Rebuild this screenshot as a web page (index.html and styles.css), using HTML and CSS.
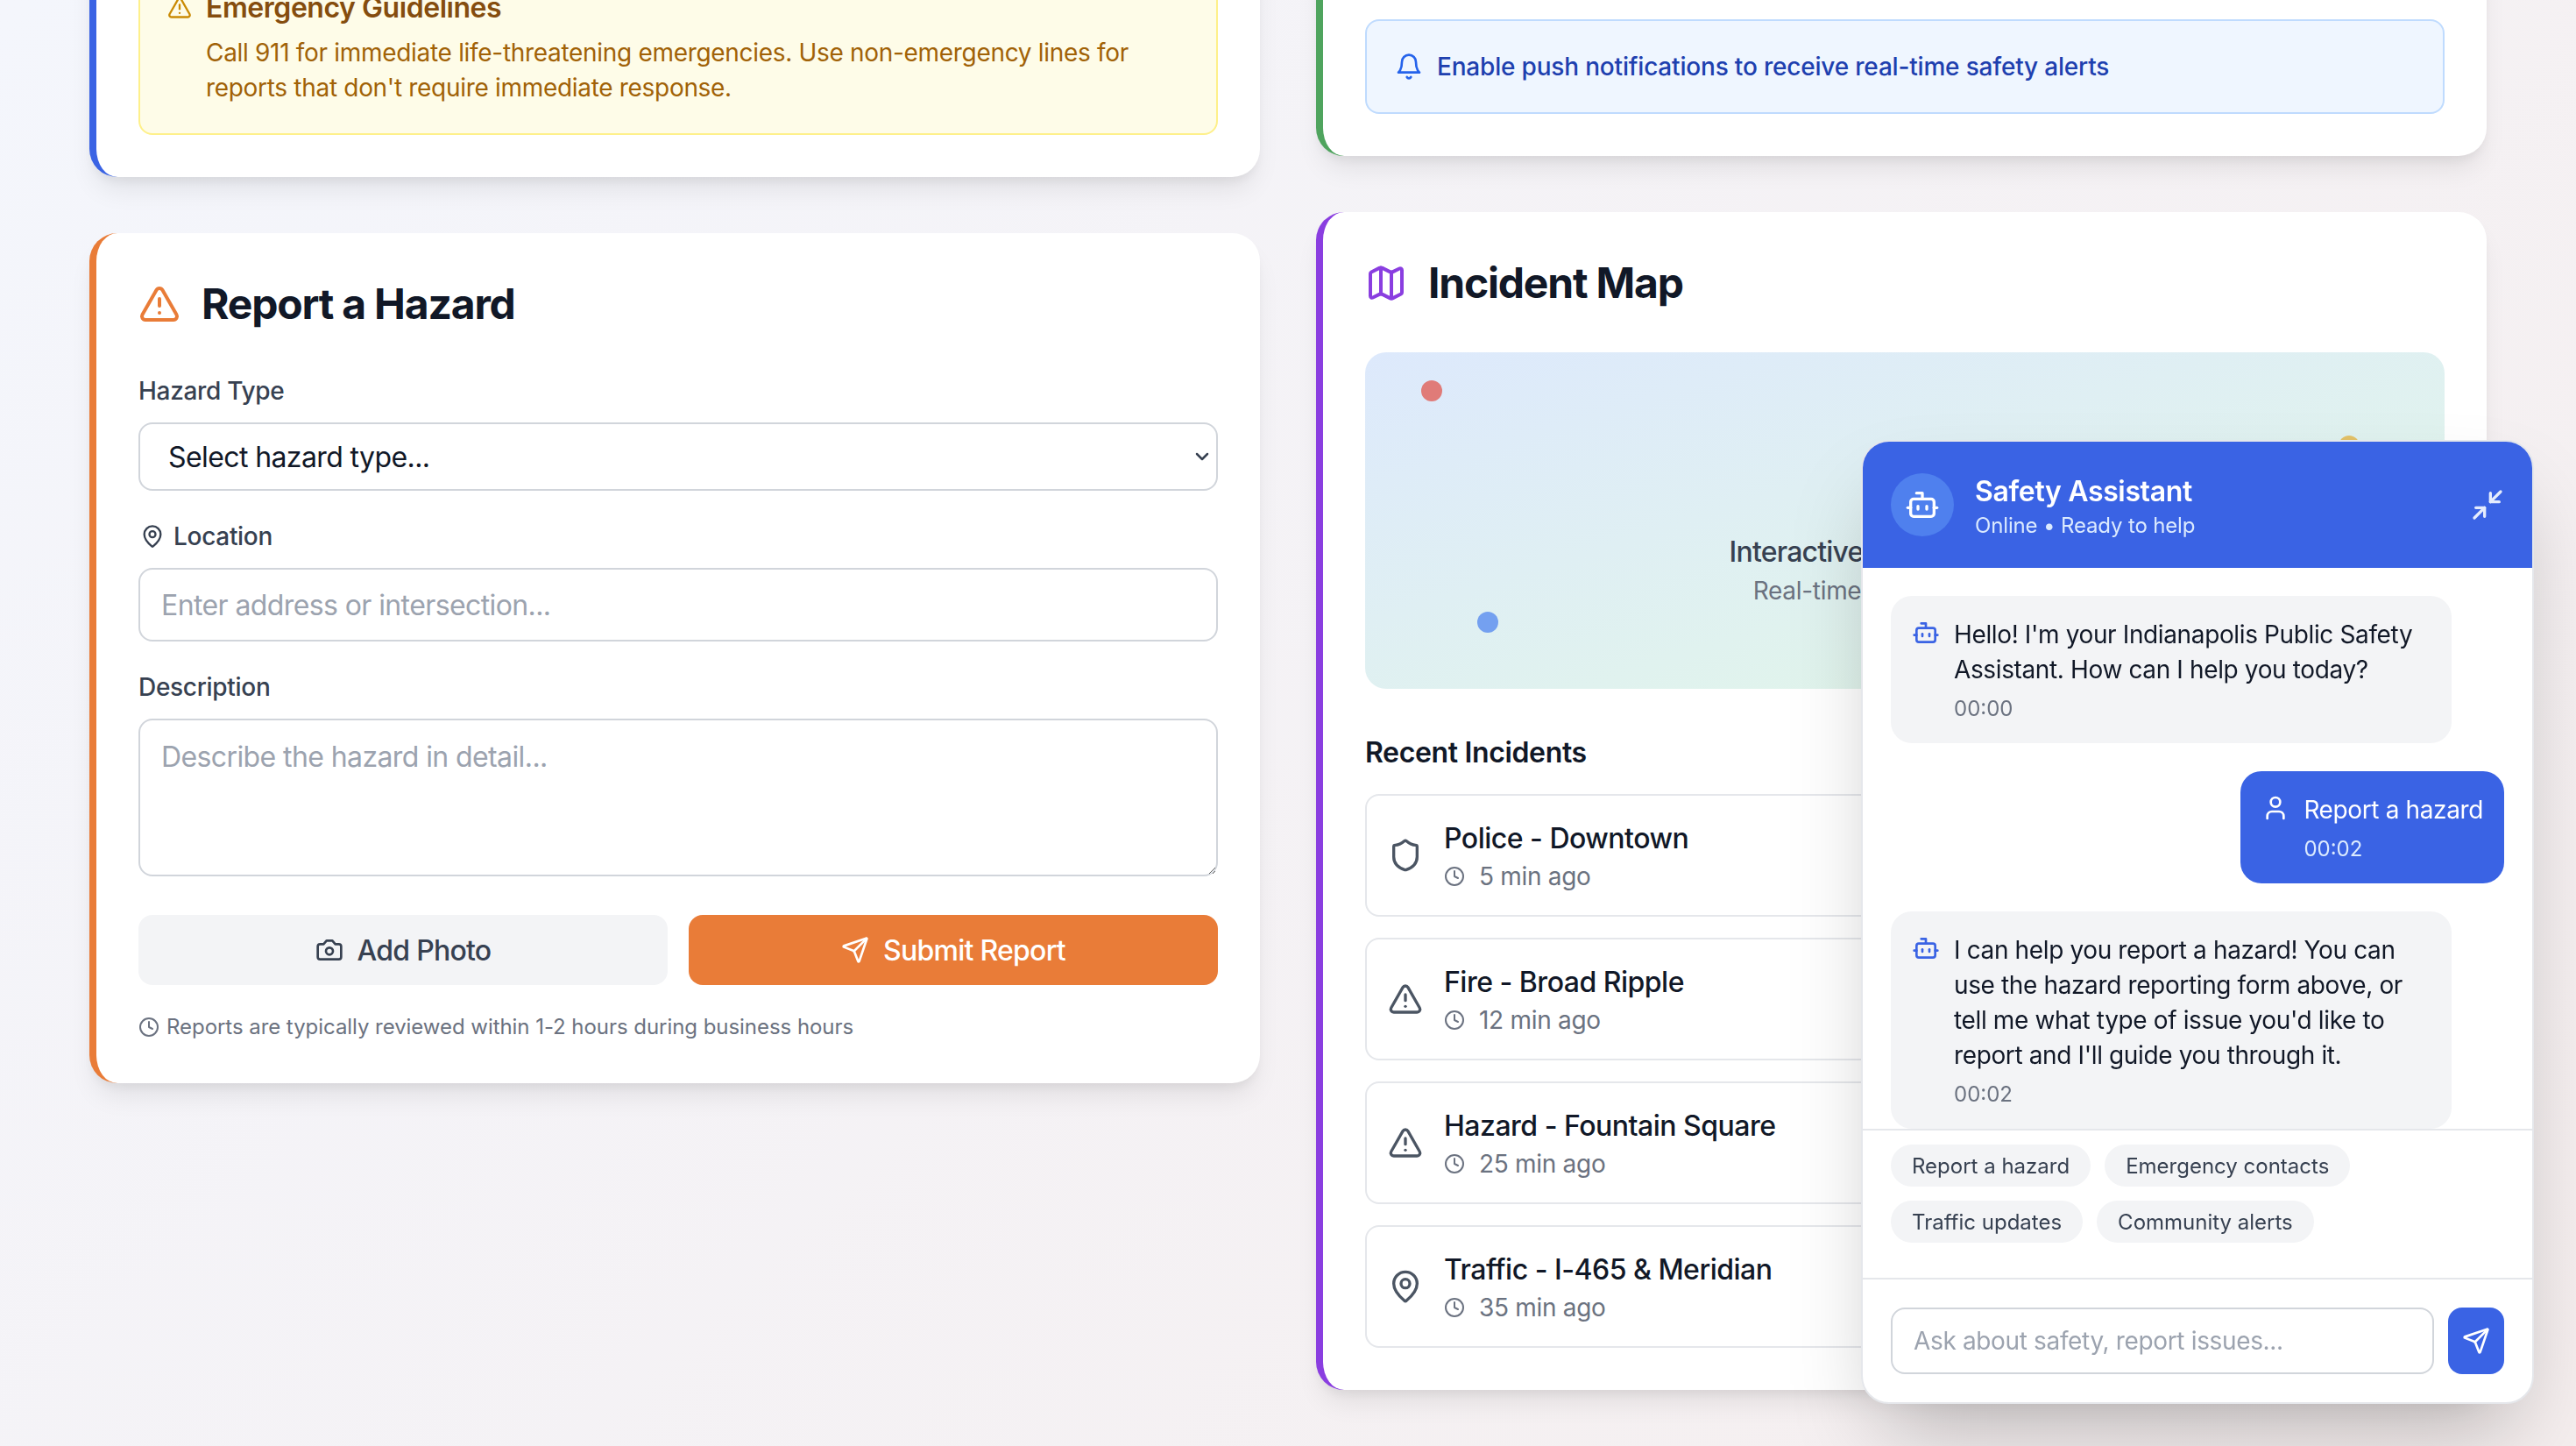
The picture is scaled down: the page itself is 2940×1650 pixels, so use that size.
FILE: index.html
```html
<!DOCTYPE html>
<html lang="en">
<head>
  <meta charset="UTF-8">
  <meta name="viewport" content="width=device-width, initial-scale=1.0">
  <title>Indianapolis Public Safety</title>
  <link rel="stylesheet" href="styles.css">
</head>
<body>
  <!-- Icons -->
  <svg class="sprite" xmlns="http://www.w3.org/2000/svg">
    <symbol id="i-alert" viewBox="0 0 24 24"><path d="m21.73 18-8-14a2 2 0 0 0-3.48 0l-8 14A2 2 0 0 0 4 21h16a2 2 0 0 0 1.73-3"/><path d="M12 9v4"/><path d="M12 17h.01"/></symbol>
    <symbol id="i-bell" viewBox="0 0 24 24"><path d="M6 8a6 6 0 0 1 12 0c0 7 3 9 3 9H3s3-2 3-9"/><path d="M10.3 21a1.94 1.94 0 0 0 3.4 0"/></symbol>
    <symbol id="i-map" viewBox="0 0 24 24"><path d="M14.106 5.553a2 2 0 0 0 1.788 0l3.659-1.83A1 1 0 0 1 21 4.619v12.764a1 1 0 0 1-.553.894l-4.553 2.277a2 2 0 0 1-1.788 0l-4.212-2.106a2 2 0 0 0-1.788 0l-3.659 1.83A1 1 0 0 1 3 19.381V6.618a1 1 0 0 1 .553-.894l4.553-2.277a2 2 0 0 1 1.788 0z"/><path d="M15 5.764v15"/><path d="M9 3.236v15"/></symbol>
    <symbol id="i-pin" viewBox="0 0 24 24"><path d="M20 10c0 4.993-5.539 10.193-7.399 11.799a1 1 0 0 1-1.202 0C9.539 20.193 4 14.993 4 10a8 8 0 0 1 16 0"/><circle cx="12" cy="10" r="3"/></symbol>
    <symbol id="i-camera" viewBox="0 0 24 24"><path d="M14.5 4h-5L7 7H4a2 2 0 0 0-2 2v9a2 2 0 0 0 2 2h16a2 2 0 0 0 2-2V9a2 2 0 0 0-2-2h-3l-2.5-3z"/><circle cx="12" cy="13" r="3"/></symbol>
    <symbol id="i-send" viewBox="0 0 24 24"><path d="M14.536 21.686a.5.5 0 0 0 .937-.024l6.5-19a.496.496 0 0 0-.635-.635l-19 6.5a.5.5 0 0 0-.024.937l7.93 3.18a2 2 0 0 1 1.112 1.11z"/><path d="m21.854 2.147-10.94 10.939"/></symbol>
    <symbol id="i-clock" viewBox="0 0 24 24"><circle cx="12" cy="12" r="10"/><polyline points="12 6 12 12 16 14"/></symbol>
    <symbol id="i-shield" viewBox="0 0 24 24"><path d="M20 13c0 5-3.5 7.5-7.66 8.95a1 1 0 0 1-.67-.01C7.5 20.5 4 18 4 13V6a1 1 0 0 1 1-1c2 0 4.5-1.2 6.24-2.72a1.17 1.17 0 0 1 1.52 0C14.51 3.81 17 5 19 5a1 1 0 0 1 1 1z"/></symbol>
    <symbol id="i-bot" viewBox="0 0 24 24"><path d="M12 8V4H8"/><rect x="4" y="8" width="16" height="12" rx="2"/><path d="M2 14h2"/><path d="M20 14h2"/><path d="M15 13v2"/><path d="M9 13v2"/></symbol>
    <symbol id="i-user" viewBox="0 0 24 24"><path d="M19 21v-2a4 4 0 0 0-4-4H9a4 4 0 0 0-4 4v2"/><circle cx="12" cy="7" r="4"/></symbol>
    <symbol id="i-minimize" viewBox="0 0 24 24"><polyline points="4 14 10 14 10 20"/><polyline points="20 10 14 10 14 4"/><line x1="14" y1="10" x2="21" y2="3"/><line x1="3" y1="21" x2="10" y2="14"/></symbol>
    <symbol id="i-chevron" viewBox="0 0 24 24"><path d="m6 9 6 6 6-6"/></symbol>
  </svg>

  <div class="top-shadow"></div>

  <main class="dashboard">
    <!-- Left column -->
    <div class="column">
      <section class="card card-blue">
        <div class="notice notice-yellow">
          <svg class="icon icon-28"><use href="#i-alert"/></svg>
          <div>
            <h3 class="notice-title">Emergency Guidelines</h3>
            <p class="notice-text">Call 911 for immediate life-threatening emergencies. Use non-emergency lines for reports that don't require immediate response.</p>
          </div>
        </div>
      </section>

      <section class="card card-orange">
        <h2 class="card-title"><svg class="icon icon-48 text-orange"><use href="#i-alert"/></svg>Report a Hazard</h2>

        <form class="hazard-form">
          <label class="field-label" for="hazardType">Hazard Type</label>
          <div class="select-wrap">
            <select id="hazardType" class="field-select">
              <option>Select hazard type...</option>
            </select>
            <svg class="icon select-arrow"><use href="#i-chevron"/></svg>
          </div>

          <label class="field-label label-icon" for="hazardLocation"><svg class="icon icon-28"><use href="#i-pin"/></svg>Location</label>
          <input id="hazardLocation" class="field-input" type="text" placeholder="Enter address or intersection...">

          <label class="field-label" for="hazardDescription">Description</label>
          <textarea id="hazardDescription" class="field-input field-area" placeholder="Describe the hazard in detail..."></textarea>

          <div class="form-buttons">
            <button type="button" class="btn btn-gray"><svg class="icon icon-32"><use href="#i-camera"/></svg>Add Photo</button>
            <button type="button" class="btn btn-orange"><svg class="icon icon-32"><use href="#i-send"/></svg>Submit Report</button>
          </div>
        </form>

        <p class="form-hint"><svg class="icon icon-24"><use href="#i-clock"/></svg>Reports are typically reviewed within 1-2 hours during business hours</p>
      </section>
    </div>

    <!-- Right column -->
    <div class="column">
      <section class="card card-green">
        <div class="notice notice-blue">
          <svg class="icon icon-32"><use href="#i-bell"/></svg>
          <span>Enable push notifications to receive real-time safety alerts</span>
        </div>
      </section>

      <section class="card card-purple">
        <h2 class="card-title"><svg class="icon icon-48 text-purple"><use href="#i-map"/></svg>Incident Map</h2>

        <div class="map-box">
          <span class="map-dot dot-red"></span>
          <span class="map-dot dot-yellow"></span>
          <span class="map-dot dot-blue"></span>
          <p class="map-title">Interactive Crime Map View</p>
          <p class="map-sub">Real-time incident tracking</p>
        </div>

        <h3 class="list-title">Recent Incidents</h3>
        <ul class="incident-list">
          <li class="incident">
            <svg class="icon icon-40"><use href="#i-shield"/></svg>
            <div>
              <div class="incident-name">Police - Downtown</div>
              <div class="incident-time"><svg class="icon icon-24"><use href="#i-clock"/></svg>5 min ago</div>
            </div>
          </li>
          <li class="incident">
            <svg class="icon icon-40"><use href="#i-alert"/></svg>
            <div>
              <div class="incident-name">Fire - Broad Ripple</div>
              <div class="incident-time"><svg class="icon icon-24"><use href="#i-clock"/></svg>12 min ago</div>
            </div>
          </li>
          <li class="incident">
            <svg class="icon icon-40"><use href="#i-alert"/></svg>
            <div>
              <div class="incident-name">Hazard - Fountain Square</div>
              <div class="incident-time"><svg class="icon icon-24"><use href="#i-clock"/></svg>25 min ago</div>
            </div>
          </li>
          <li class="incident">
            <svg class="icon icon-40"><use href="#i-pin"/></svg>
            <div>
              <div class="incident-name">Traffic - I-465 &amp; Meridian</div>
              <div class="incident-time"><svg class="icon icon-24"><use href="#i-clock"/></svg>35 min ago</div>
            </div>
          </li>
        </ul>
      </section>
    </div>
  </main>

  <!-- Chat widget -->
  <aside class="chat">
    <header class="chat-header">
      <div class="chat-avatar"><svg class="icon icon-40"><use href="#i-bot"/></svg></div>
      <div class="chat-heading">
        <div class="chat-name">Safety Assistant</div>
        <div class="chat-status">Online • Ready to help</div>
      </div>
      <svg class="icon icon-40 chat-close"><use href="#i-minimize"/></svg>
    </header>

    <div class="chat-messages">
      <div class="msg msg-bot">
        <svg class="icon icon-32 text-primary"><use href="#i-bot"/></svg>
        <div>
          <p class="msg-text">Hello! I'm your Indianapolis Public Safety Assistant. How can I help you today?</p>
          <div class="msg-time">00:00</div>
        </div>
      </div>
      <div class="msg msg-user">
        <svg class="icon icon-32"><use href="#i-user"/></svg>
        <div>
          <p class="msg-text">Report a hazard</p>
          <div class="msg-time">00:02</div>
        </div>
      </div>
      <div class="msg msg-bot">
        <svg class="icon icon-32 text-primary"><use href="#i-bot"/></svg>
        <div>
          <p class="msg-text">I can help you report a hazard! You can use the hazard reporting form above, or tell me what type of issue you'd like to report and I'll guide you through it.</p>
          <div class="msg-time">00:02</div>
        </div>
      </div>
    </div>

    <div class="chat-chips">
      <button class="chip">Report a hazard</button>
      <button class="chip">Emergency contacts</button>
      <button class="chip">Traffic updates</button>
      <button class="chip">Community alerts</button>
    </div>

    <div class="chat-input-row">
      <input class="chat-input" type="text" placeholder="Ask about safety, report issues...">
      <button class="chat-send"><svg class="icon icon-32"><use href="#i-send"/></svg></button>
    </div>
  </aside>
</body>
</html>
```

FILE: styles.css
```css
/* Global Styles */
* {
    box-sizing: border-box;
}

html,
body {
    height: 1650px;
}

body {
    margin: 0;
    overflow: hidden;
    font-family: Inter, "Noto Sans", sans-serif;
    color: #111827;
    background: linear-gradient(135deg, #f4f6fc 0%, #f5eeee 100%);
}

h2, h3, p, ul {
    margin: 0;
    padding: 0;
}

button, input, select, textarea {
    font-family: inherit;
}

.sprite {
    display: none;
}

.icon {
    flex-shrink: 0;
    fill: none;
    stroke: currentColor;
    stroke-width: 2;
    stroke-linecap: round;
    stroke-linejoin: round;
}

.icon-24 { width: 24px; height: 24px; }
.icon-28 { width: 28px; height: 28px; }
.icon-32 { width: 32px; height: 32px; }
.icon-40 { width: 40px; height: 40px; }
.icon-48 { width: 48px; height: 48px; }

.text-orange { color: #e97c38; }
.text-purple { color: #8a3ee0; }
.text-primary { color: #3a63e4; }

/* shadow of the sticky header, which is scrolled out of the picture */
.top-shadow {
    position: fixed;
    top: 0;
    left: 0;
    right: 0;
    height: 0;
    z-index: 5;
    box-shadow: 0 4px 14px rgba(0, 0, 0, 0.16);
}

/* Page grid */
.dashboard {
    display: grid;
    grid-template-columns: 1fr 1fr;
    gap: 64px;
    align-items: start;
    padding: 0 102px;
    margin-top: -94px;
}

.column {
    display: flex;
    flex-direction: column;
    gap: 64px;
}

.card {
    padding: 48px;
    background: #fff;
    border-left: 8px solid #3a63e4;
    border-radius: 32px;
    box-shadow: 0 20px 30px -6px rgba(0, 0, 0, 0.08), 0 8px 12px -4px rgba(0, 0, 0, 0.06);
}

.card-blue { border-left-color: #3a63e4; }
.card-orange { border-left-color: #e97c38; }
.card-green { border-left-color: #4fa45e; padding-top: 116px; }
.card-purple { border-left-color: #8a3ee0; }

.card-title {
    display: flex;
    align-items: center;
    gap: 24px;
    margin-bottom: 48px;
    padding-top: 2px;
    font-size: 48px;
    line-height: 62px;
    font-weight: 700;
    letter-spacing: -1.2px;
}

/* Notices */
.notice {
    display: flex;
    gap: 16px;
    border: 2px solid;
    border-radius: 16px;
    font-size: 28px;
    line-height: 40px;
}

.notice-yellow {
    padding: 29px 30px 32px;
    background: #fefce8;
    border-color: #fef08a;
    color: #a16207;
}

.notice-yellow .icon {
    margin-top: 10px;
    margin-left: 1px;
    color: #ca8a04;
}

.notice-title {
    margin-bottom: 7px;
    font-size: 32px;
    line-height: 48px;
    font-weight: 600;
    letter-spacing: -0.45px;
    color: #854d0e;
}

.notice-text {
    letter-spacing: -0.31px;
    color: #a16207;
}

.notice-blue {
    align-items: center;
    padding: 32px;
    background: #eff6ff;
    border-color: #bfdbfe;
    color: #1e40af;
    font-weight: 500;
    letter-spacing: -0.19px;
}

.notice-blue .icon {
    color: #2563eb;
}

/* Hazard form */
.field-label {
    display: flex;
    align-items: center;
    gap: 8px;
    margin-bottom: 16px;
    font-size: 28px;
    line-height: 40px;
    font-weight: 500;
    letter-spacing: -0.3px;
    color: #374151;
}

.label-icon {
    gap: 10px;
}

.label-icon .icon {
    margin-left: 2px;
}

.select-wrap {
    position: relative;
    margin-bottom: 32px;
}

.field-select {
    display: block;
    width: 100%;
    height: 78px;
    padding: 0 32px;
    font-size: 32px;
    letter-spacing: -0.6px;
    color: #111827;
    background: #fff;
    border: 2px solid #d1d5db;
    border-radius: 16px;
    appearance: none;
}

.select-arrow {
    position: absolute;
    top: 27px;
    right: 6px;
    width: 24px;
    height: 24px;
    color: #374151;
    stroke-width: 2.5;
    pointer-events: none;
}

.field-input {
    display: block;
    width: 100%;
    height: 84px;
    margin-bottom: 32px;
    padding: 16px 24px;
    font-size: 32px;
    line-height: 48px;
    letter-spacing: -0.6px;
    color: #111827;
    background: #fff;
    border: 2px solid #d1d5db;
    border-radius: 16px;
}

.field-input::placeholder,
.chat-input::placeholder {
    color: #9ca3af;
    opacity: 1;
}

.field-area {
    height: 180px;
    margin-bottom: 44px;
    padding-top: 18px;
    resize: vertical;
}

.form-buttons {
    display: grid;
    grid-template-columns: 1fr 1fr;
    gap: 24px;
}

.btn {
    display: flex;
    align-items: center;
    justify-content: center;
    gap: 16px;
    height: 80px;
    font-size: 32px;
    font-weight: 500;
    letter-spacing: -0.75px;
    border: none;
    border-radius: 16px;
}

.btn-gray {
    background: #f3f4f6;
    color: #374151;
}

.btn-orange {
    background: #e97c38;
    color: #fff;
}

.form-hint {
    display: flex;
    align-items: center;
    gap: 8px;
    margin-top: 32px;
    font-size: 24px;
    line-height: 32px;
    letter-spacing: -0.05px;
    color: #6b7280;
}

/* Map */
.map-box {
    position: relative;
    height: 384px;
    margin-bottom: 48px;
    padding-top: 92px;
    text-align: center;
    background: linear-gradient(to bottom right, #dde9fc, #e2f8e6);
    border-radius: 24px;
}

.map-dot {
    position: absolute;
    width: 24px;
    height: 24px;
    border-radius: 50%;
}

.dot-red { top: 32px; left: 64px; background: #e07b78; }
.dot-yellow { top: 95px; left: 1111px; background: #e3c268; }
.dot-blue { top: 296px; left: 128px; background: #74a0f0; }

.map-title {
    margin-top: 112px;
    font-size: 32px;
    line-height: 48px;
    font-weight: 500;
    letter-spacing: -0.8px;
    color: #374151;
}

.map-sub {
    font-size: 28px;
    line-height: 40px;
    letter-spacing: -0.3px;
    color: #6b7280;
}

/* Incident list */
.list-title {
    margin-bottom: 24px;
    padding-top: 2px;
    font-size: 32px;
    line-height: 46px;
    font-weight: 600;
    letter-spacing: -0.35px;
}

.incident-list {
    display: flex;
    flex-direction: column;
    gap: 24px;
    list-style: none;
}

.incident {
    display: flex;
    align-items: center;
    gap: 24px;
    padding: 24px;
    border: 2px solid #e5e7eb;
    border-radius: 16px;
}

.incident > .icon {
    color: #4b5563;
}

.incident-name {
    padding-top: 1px;
    font-size: 32px;
    line-height: 47px;
    font-weight: 500;
    letter-spacing: -0.5px;
}

.incident-time {
    display: flex;
    align-items: center;
    gap: 16px;
    font-size: 28px;
    line-height: 40px;
    letter-spacing: -0.3px;
    color: #6b7280;
}

/* Chat widget */
.chat {
    position: fixed;
    right: 48px;
    bottom: 48px;
    z-index: 10;
    display: flex;
    flex-direction: column;
    width: 768px;
    height: 1100px;
    overflow: hidden;
    background: #fff;
    border: 2px solid #e5e7eb;
    border-radius: 32px;
    box-shadow: 0 50px 100px -24px rgba(0, 0, 0, 0.25);
}

.chat-header {
    display: flex;
    align-items: center;
    gap: 24px;
    padding: 32px;
    background: #3a63e4;
    color: #fff;
}

.chat-avatar {
    display: flex;
    align-items: center;
    justify-content: center;
    width: 72px;
    height: 72px;
    background: #4f80ee;
    border-radius: 50%;
}

.chat-heading {
    flex: 1;
}

.chat-name {
    padding-top: 1px;
    font-size: 32px;
    line-height: 47px;
    font-weight: 600;
    letter-spacing: -0.35px;
}

.chat-status {
    font-size: 24px;
    line-height: 32px;
    letter-spacing: -0.15px;
    color: #dbeafe;
}

.chat-close {
    margin-right: -1px;
    color: #e5ecfd;
}

.chat-messages {
    display: flex;
    flex-direction: column;
    flex-shrink: 0;
    gap: 32px;
    height: 642px;
    padding: 32px 32px 0;
    overflow: hidden;
    border-bottom: 2px solid #e5e7eb;
}

.msg {
    display: flex;
    flex-shrink: 0;
    gap: 16px;
    padding: 24px;
    border-radius: 24px;
}

.msg > .icon {
    margin-top: 2px;
}

.msg-bot {
    width: 640px;
    background: #f3f4f6;
}

.msg-user {
    align-self: flex-end;
    background: #3a63e4;
    color: #fff;
}

.msg-text {
    font-size: 28px;
    line-height: 40px;
    letter-spacing: -0.37px;
}

.msg-time {
    margin-top: 10px;
    font-size: 24px;
    line-height: 30px;
    color: #6b7280;
}

.msg-user .msg-time {
    color: #dbeafe;
}

.chat-chips {
    display: flex;
    flex-wrap: wrap;
    gap: 16px;
    padding: 16px 32px 40px;
    border-bottom: 2px solid #e5e7eb;
}

.chip {
    height: 48px;
    padding: 0 24px;
    font-size: 24px;
    color: #374151;
    background: #f3f4f6;
    border: none;
    border-radius: 24px;
}

.chat-input-row {
    display: flex;
    gap: 16px;
    padding: 32px;
}

.chat-input {
    flex: 1;
    min-width: 0;
    height: 76px;
    padding: 0 24px;
    font-size: 28px;
    letter-spacing: -0.35px;
    color: #111827;
    background: #fff;
    border: 2px solid #d1d5db;
    border-radius: 16px;
}

.chat-send {
    display: flex;
    align-items: center;
    justify-content: center;
    width: 64px;
    height: 76px;
    padding: 0;
    color: #fff;
    background: #3a63e4;
    border: none;
    border-radius: 16px;
}
```
